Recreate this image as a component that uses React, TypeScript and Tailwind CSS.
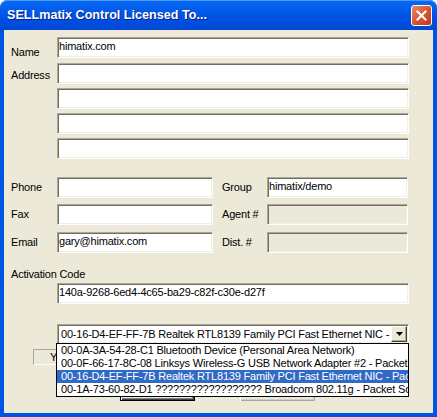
import React from "react";

const sunken =
  "border border-t-[#ACA899] border-l-[#ACA899] border-b-white border-r-white shadow-[inset_1px_1px_0_#716F64,inset_-1px_-1px_0_#F1EFE2]";

const adapters = [
  "00-0A-3A-54-28-C1 Bluetooth Device (Personal Area Network)",
  "00-0F-66-17-8C-08 Linksys Wireless-G USB Network Adapter #2 - Packet Scheduler Miniport",
  "00-16-D4-EF-FF-7B Realtek RTL8139 Family PCI Fast Ethernet NIC - Packet Scheduler Miniport",
  "00-1A-73-60-82-D1 ?????????????????? Broadcom 802.11g - Packet Scheduler Miniport",
];

function Field({ value = "", width, disabled }: { value?: string; width: string; disabled?: boolean }) {
  return (
    <div
      className={`${sunken} ${width} h-[21px] shrink-0 overflow-hidden whitespace-nowrap pl-[1px] pt-[2px] leading-[13px] ${
        disabled ? "bg-[#ECE9D8]" : "bg-white"
      }`}
    >
      {value}
    </div>
  );
}

function Label({ text, width, top }: { text: string; width: string; top: string }) {
  return <div className={`${width} ${top} shrink-0 leading-[13px]`}>{text}</div>;
}

function TitleBar() {
  return (
    <div className="flex h-[30px] shrink-0 items-start rounded-t-[8px] bg-gradient-to-b from-[#0A6AF3] via-[#0055E6] to-[#0047D4] pl-[7px] pr-[5px] pt-[5px] shadow-[inset_0_1px_0_#4A9BFF]">
      <div className="mt-[3px] flex-1 text-[12.6px] font-bold leading-[15px] tracking-normal text-white [text-shadow:1px_1px_0_#0A1E88]">
        SELLmatix Control Licensed To...
      </div>
      <div className="flex h-[21px] w-[21px] items-center justify-center rounded-[3px] border border-white bg-gradient-to-br from-[#E88A6A] via-[#D9552F] to-[#C0391A]">
        <svg width="11" height="11" viewBox="0 0 11 11">
          <path d="M1.5 1.5 L9.5 9.5 M9.5 1.5 L1.5 9.5" stroke="white" strokeWidth="2.2" strokeLinecap="square" />
        </svg>
      </div>
    </div>
  );
}

export default function App() {
  return (
    <div className="h-[417px] w-[437px] bg-white">
      <div className="flex h-[417px] w-[437px] flex-col rounded-t-[8px] bg-[#0054E3] font-['Liberation_Sans',Arial,sans-serif] text-[11px] tracking-[-0.2px] text-black">
        <TitleBar />
        <div className="relative mx-[4px] mb-[4px] flex-1 bg-[#ECE9D8] pl-[7px] pt-[7px]">
          {/* name + address */}
          <div className="flex">
            <Label text="Name" width="w-[46px]" top="pt-[9px]" />
            <Field value="himatix.com" width="w-[352px]" />
          </div>
          <div className="mt-[4px] flex">
            <Label text="Address" width="w-[46px]" top="pt-[6px]" />
            <Field width="w-[352px]" />
          </div>
          <div className="mt-[4px] flex pl-[46px]">
            <Field width="w-[352px]" />
          </div>
          <div className="mt-[4px] flex pl-[46px]">
            <Field width="w-[352px]" />
          </div>
          <div className="mt-[4px] flex pl-[46px]">
            <Field width="w-[352px]" />
          </div>

          {/* contact columns */}
          <div className="mt-[18px] flex">
            <Label text="Phone" width="w-[46px]" top="pt-[4px]" />
            <Field width="w-[156px]" />
            <Label text="Group" width="ml-[9px] w-[45px]" top="pt-[4px]" />
            <Field value="himatix/demo" width="w-[141px]" />
          </div>
          <div className="mt-[6px] flex">
            <Label text="Fax" width="w-[46px]" top="pt-[4px]" />
            <Field width="w-[156px]" />
            <Label text="Agent #" width="ml-[9px] w-[45px]" top="pt-[4px]" />
            <Field width="w-[141px]" disabled />
          </div>
          <div className="mt-[7px] flex">
            <Label text="Email" width="w-[46px]" top="pt-[4px]" />
            <Field value="gary@himatix.com" width="w-[156px]" />
            <Label text="Dist. #" width="ml-[9px] w-[45px]" top="pt-[4px]" />
            <Field width="w-[141px]" disabled />
          </div>

          {/* activation */}
          <div className="mt-[15px] leading-[13px]">Activation Code</div>
          <div className="mt-[2px] pl-[46px]">
            <Field value="140a-9268-6ed4-4c65-ba29-c82f-c30e-d27f" width="w-[352px]" />
          </div>

          {/* adapter combo */}
          <div className={`${sunken} ml-[46px] mt-[20px] flex h-[20px] w-[352px] bg-white`}>
            <div className="flex-1 overflow-hidden whitespace-nowrap pl-[3px] pt-[3px] leading-[13px]">{adapters[2]}</div>
            <div className="m-[1px] flex h-[16px] w-[16px] items-center justify-center border border-t-white border-l-white border-b-[#404040] border-r-[#404040] bg-[#ECE9D8] shadow-[inset_-1px_-1px_0_#ACA899]">
              <svg width="7" height="4" viewBox="0 0 7 4">
                <path d="M0 0 H7 L3.5 4 Z" fill="black" />
              </svg>
            </div>
          </div>

          {/* content hidden under the popup */}
          <div className="ml-[22px] mt-[5px] h-[16px] w-[140px] border border-t-[#ACA899] border-l-[#ACA899] border-b-white border-r-white pl-[16px] pt-[1px] leading-[13px]">
            Your
          </div>
          <div className="mt-[13px] flex gap-[45px] pl-[109px]">
            <div className="flex h-[23px] w-[75px] items-center justify-center border border-black bg-[#ECE9D8] shadow-[inset_1px_1px_0_white,inset_-1px_-1px_0_#404040,inset_-2px_-2px_0_#808080]">
              OK
            </div>
            <div className="flex h-[23px] w-[75px] items-center justify-center bg-[#ECE9D8] shadow-[inset_1px_1px_0_white,inset_-1px_-1px_0_#ACA899,inset_-2px_-2px_0_#D4D0C8]">
              Cancel
            </div>
          </div>

          {/* open dropdown list */}
          <div className="absolute left-[52px] top-[313px] w-[353px] border border-black bg-white">
            {adapters.map((a, i) => (
              <div
                key={a}
                className={`h-[13px] overflow-hidden whitespace-nowrap pl-[4px] leading-[13px] ${
                  i === 2 ? "bg-[#316AC5] text-white" : ""
                }`}
              >
                {a}
              </div>
            ))}
          </div>
        </div>
      </div>
    </div>
  );
}
